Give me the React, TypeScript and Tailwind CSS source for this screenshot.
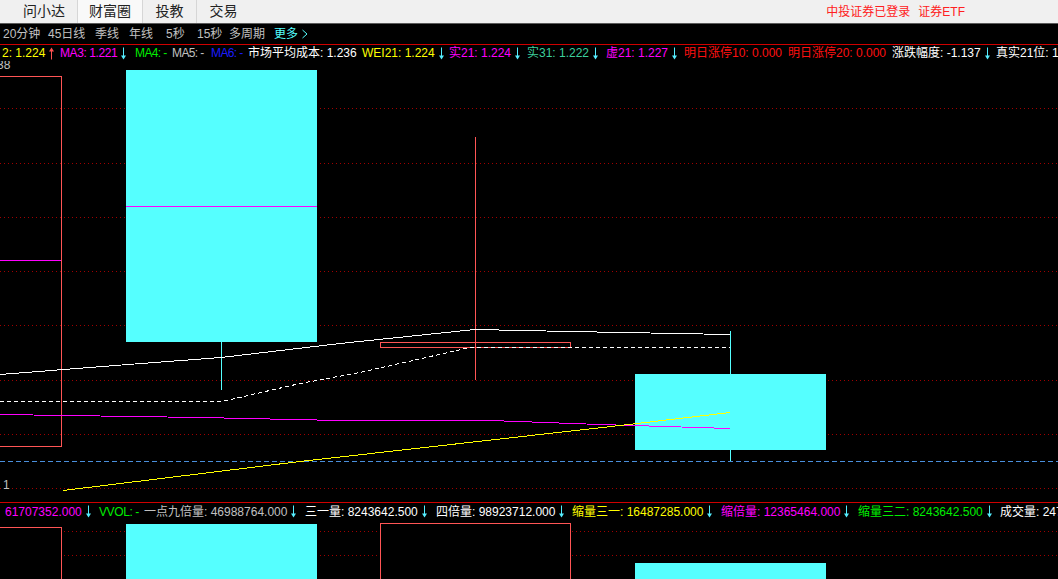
import React from "react";

type Item = { w: string; c: string; t: string; arrow?: "up" | "down" };

const indicators: Item[] = [
  { w: "w-[58px]", c: "text-[#ffff00]", t: "2: 1.224", arrow: "up" },
  { w: "w-[75px] tracking-[-0.4px]", c: "text-[#ff00ff]", t: "MA3: 1.221", arrow: "down" },
  { w: "w-[37px] tracking-[-0.6px]", c: "text-[#00ee00]", t: "MA4: -" },
  { w: "w-[39px] tracking-[-0.6px]", c: "text-[#c0c0c0]", t: "MA5: -" },
  { w: "w-[37px] tracking-[-0.6px]", c: "text-[#1c1cff]", t: "MA6: -" },
  { w: "w-[114px]", c: "text-white", t: "市场平均成本: 1.236" },
  { w: "w-[87px]", c: "text-[#ffff00]", t: "WEI21: 1.224", arrow: "down" },
  { w: "w-[78px]", c: "text-[#ff00ff]", t: "实21: 1.224", arrow: "down" },
  { w: "w-[79px]", c: "text-[#3ccf9c]", t: "实31: 1.222", arrow: "down" },
  { w: "w-[78px]", c: "text-[#ff00ff]", t: "虚21: 1.227", arrow: "down" },
  { w: "w-[104px]", c: "text-[#ff1010]", t: "明日涨停10: 0.000" },
  { w: "w-[104px]", c: "text-[#ff1010]", t: "明日涨停20: 0.000" },
  { w: "w-[104px]", c: "text-white", t: "涨跌幅度: -1.137", arrow: "down" },
  { w: "w-[80px]", c: "text-white", t: "真实21位: 1.224" },
];

const volumes: Item[] = [
  { w: "w-[94px]", c: "text-[#ff00ff]", t: "61707352.000", arrow: "down" },
  { w: "w-[45px] tracking-[-0.4px]", c: "text-[#00ee00]", t: "VVOL: -" },
  { w: "w-[161px]", c: "text-[#c0c0c0]", t: "一点九倍量: 46988764.000", arrow: "down" },
  { w: "w-[131px]", c: "text-white", t: "三一量: 8243642.500", arrow: "down" },
  { w: "w-[136px]", c: "text-white", t: "四倍量: 98923712.000", arrow: "down" },
  { w: "w-[149px]", c: "text-[#ffff00]", t: "缩量三一: 16487285.000", arrow: "down" },
  { w: "w-[137px]", c: "text-[#ff00ff]", t: "缩倍量: 12365464.000", arrow: "down" },
  { w: "w-[142px]", c: "text-[#00ee00]", t: "缩量三二: 8243642.500", arrow: "down" },
  { w: "w-[80px]", c: "text-white", t: "成交量: 24731353.000" },
];

const periods = [
  { w: "w-[45px]", t: "20分钟" },
  { w: "w-[47px]", t: "45日线" },
  { w: "w-[34px]", t: "季线" },
  { w: "w-[37px]", t: "年线" },
  { w: "w-[31px]", t: "5秒" },
  { w: "w-[32px]", t: "15秒" },
  { w: "w-[45px]", t: "多周期" },
];

function Arrow({ dir }: { dir: "up" | "down" }) {
  const color = dir === "up" ? "#ff5050" : "#55eeff";
  return (
    <svg width="7" height="13" viewBox="0 0 7 13" className="ml-[3px] shrink-0">
      {dir === "down" ? (
        <>
          <line x1="3.5" y1="0.5" x2="3.5" y2="10" stroke={color} strokeWidth="1" />
          <polygon points="1,8.5 6,8.5 3.5,12.5" fill={color} />
        </>
      ) : (
        <>
          <line x1="3.5" y1="3" x2="3.5" y2="12.5" stroke={color} strokeWidth="1" />
          <polygon points="1,4.5 6,4.5 3.5,0.5" fill={color} />
        </>
      )}
    </svg>
  );
}

function Row({ items }: { items: Item[] }) {
  return (
    <>
      {items.map((it, i) => (
        <div key={i} className={`flex shrink-0 items-center whitespace-nowrap ${it.w} ${it.c}`}>
          <span>{it.t}</span>
          {it.arrow && <Arrow dir={it.arrow} />}
        </div>
      ))}
    </>
  );
}

const GRID = [108, 163, 217, 271, 325, 380, 434, 488];
const CYAN = "#55ffff";
const RED = "#ff5555";

function PriceChart() {
  return (
    <svg className="block" width="1058" height="441" viewBox="0 61 1058 441">
      {GRID.map((y) => (
        <line
          key={y}
          x1="0"
          y1={y + 0.5}
          x2="1058"
          y2={y + 0.5}
          stroke="#a00000"
          strokeDasharray="1 3"
          shapeRendering="crispEdges"
        />
      ))}
      <line
        x1="0"
        y1="461.5"
        x2="1058"
        y2="461.5"
        stroke="#4a8fdc"
        strokeDasharray="5 3"
        shapeRendering="crispEdges"
      />

      {/* candles */}
      <rect x="-5" y="76.5" width="66.5" height="369.5" fill="none" stroke={RED} shapeRendering="crispEdges" />
      <line x1="0" y1="260.5" x2="61" y2="260.5" stroke="#ff00ff" shapeRendering="crispEdges" />

      <line x1="221.5" y1="342" x2="221.5" y2="390" stroke={CYAN} shapeRendering="crispEdges" />
      <rect x="126" y="70" width="191" height="272" fill={CYAN} shapeRendering="crispEdges" />
      <line x1="126" y1="206.5" x2="317" y2="206.5" stroke="#ff00ff" shapeRendering="crispEdges" />

      <line x1="475.5" y1="137" x2="475.5" y2="380" stroke={RED} shapeRendering="crispEdges" />
      <rect x="380.5" y="342.5" width="190" height="5" fill="none" stroke={RED} shapeRendering="crispEdges" />

      <line x1="730.5" y1="331" x2="730.5" y2="461" stroke={CYAN} shapeRendering="crispEdges" />
      <rect x="635" y="374" width="191" height="76" fill={CYAN} shapeRendering="crispEdges" />

      {/* moving averages */}
      <polyline
        points="0,374.5 128,364.5 221,357.5 340,343.5 475,329.5 570,331.5 730,334.5"
        fill="none"
        stroke="#ffffff"
        strokeWidth="1"
        shapeRendering="crispEdges"
      />
      <polyline
        points="0,401.5 222,401.5 300,383.5 360,372.5 470,347.5 730,347.5"
        fill="none"
        stroke="#ffffff"
        strokeWidth="1"
        strokeDasharray="4 3"
        shapeRendering="crispEdges"
      />
      <polyline
        points="0,414.5 200,417.5 340,420.5 490,420.5 600,424.5 730,428.5"
        fill="none"
        stroke="#ff00ff"
        strokeWidth="1"
        shapeRendering="crispEdges"
      />
      <polyline
        points="63,490.5 300,461.5 620,425.5 730,412.5"
        fill="none"
        stroke="#ffff00"
        strokeWidth="1"
        shapeRendering="crispEdges"
      />

      <text x="-3" y="69" fontSize="12" fill="#c0c0c0" fontFamily="Liberation Sans, sans-serif">
        38
      </text>
      <text x="3" y="489" fontSize="12" fill="#c0c0c0" fontFamily="Liberation Sans, sans-serif">
        1
      </text>
    </svg>
  );
}

function VolumeChart() {
  return (
    <svg className="block" width="1058" height="59" viewBox="0 520 1058 59">
      {[531, 555].map((y) => (
        <line
          key={y}
          x1="0"
          y1={y + 0.5}
          x2="1058"
          y2={y + 0.5}
          stroke="#a00000"
          strokeDasharray="1 3"
          shapeRendering="crispEdges"
        />
      ))}
      <rect x="-5" y="527.5" width="66.5" height="60" fill="#000" stroke={RED} shapeRendering="crispEdges" />
      <rect x="126" y="524" width="191" height="60" fill={CYAN} shapeRendering="crispEdges" />
      <rect x="380.5" y="523.5" width="190" height="60" fill="#000" stroke={RED} shapeRendering="crispEdges" />
      <rect x="635" y="563" width="191" height="20" fill={CYAN} shapeRendering="crispEdges" />
    </svg>
  );
}

export default function App() {
  return (
    <div className="h-[579px] w-[1058px] overflow-hidden bg-black font-['Liberation_Sans','Noto_Sans_CJK_SC',sans-serif]">
      <div className="flex h-[24px] items-stretch border-b border-[#5a5a5a] bg-[#f0f0f0] text-[14px] text-[#222]">
        <div className="w-[11px]" />
        <div className="flex w-[66px] items-center justify-center">问小达</div>
        <div className="flex w-[66px] items-center justify-center border-x border-[#d6d6d6] bg-[#f9f9f9]">财富圈</div>
        <div className="flex w-[54px] items-center justify-center border-r border-[#d6d6d6]">投教</div>
        <div className="flex w-[53px] items-center justify-center">交易</div>
        <div className="flex-1" />
        <div className="mr-[93px] flex items-center text-[12px] text-[#ff2020]">
          中投证券已登录<span className="ml-[8px]">证券ETF</span>
        </div>
      </div>

      <div className="flex h-[20px] items-center pl-[3px] text-[12px] text-[#c0c0c0]">
        {periods.map((p) => (
          <div key={p.t} className={`shrink-0 whitespace-nowrap ${p.w}`}>
            {p.t}
          </div>
        ))}
        <div className="flex items-center text-[#55ffff]">
          更多
          <svg width="8" height="10" viewBox="0 0 8 10" className="ml-[3px]">
            <polyline points="1.5,1 6,5 1.5,9" fill="none" stroke="#55ffff" strokeWidth="1" />
          </svg>
        </div>
      </div>

      <div className="h-px bg-[#d00000]" />

      <div className="flex h-[16px] items-center overflow-hidden pl-[2px] text-[12px]">
        <Row items={indicators} />
      </div>

      <PriceChart />

      <div className="h-px bg-[#d00000]" />

      <div className="flex h-[17px] items-center overflow-hidden pl-[5px] text-[12px]">
        <Row items={volumes} />
      </div>

      <VolumeChart />
    </div>
  );
}
